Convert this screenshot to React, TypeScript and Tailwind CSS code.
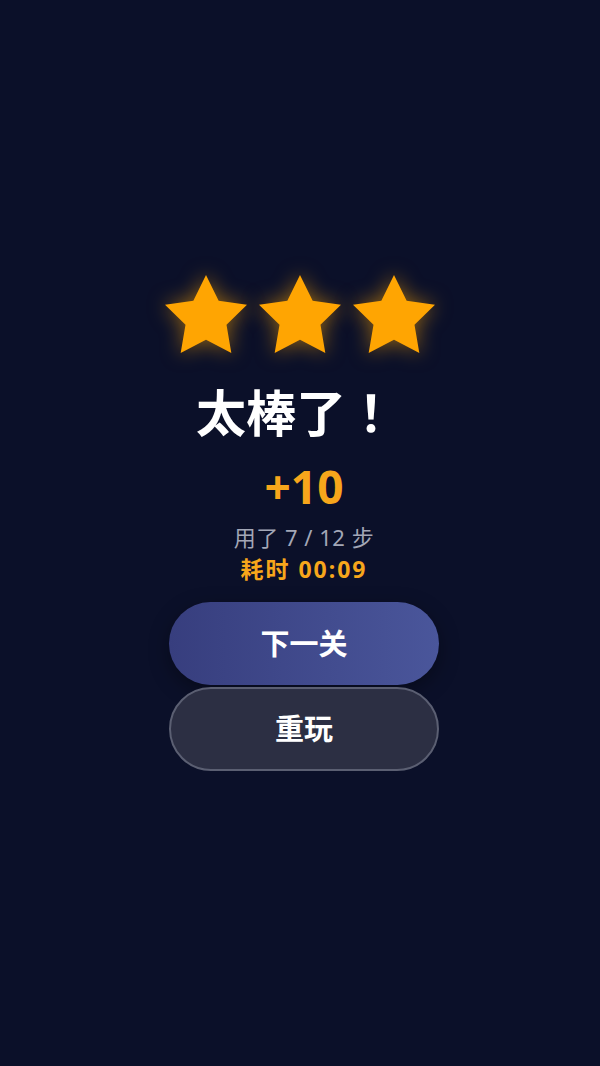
import React from 'react';

const font = { fontFamily: '"Noto Sans", "Noto Sans CJK SC", sans-serif' };
const titleFont = { fontFamily: '"Noto Sans", "Noto Sans CJK JP", sans-serif' };

const Star: React.FC = () => (
  <svg
    width="82"
    height="82"
    viewBox="2 1.5 20 20"
    className="drop-shadow-[0_0_10px_rgba(255,166,0,0.55)]"
  >
    <polygon
      points="12,2 15.09,8.26 22,9.27 17,14.14 18.18,21.02 12,17.77 5.82,21.02 7,14.14 2,9.27 8.91,8.26"
      fill="#ffa502"
    />
  </svg>
);

const App: React.FC = () => {
  return (
    <div className="w-[600px] h-[1066px] bg-[#0b1029] overflow-hidden flex flex-col items-center" style={font}>
      <div className="mt-[273px] flex gap-3">
        <Star />
        <Star />
        <Star />
      </div>
      <div className="flex flex-col items-center pl-2">
        <h1 className="mt-[33px] pr-4 text-[50px] leading-none font-bold text-white" style={titleFont}>
          太棒了！
        </h1>
        <div className="mt-[25px] text-[46px] leading-none font-bold text-[#f7a61b]">+10</div>
        <div className="mt-[17px] text-[22px] leading-none tracking-[0.5px] text-[#a3a7b7]">用了 7 / 12 步</div>
        <div className="mt-[10px] text-[23px] leading-none tracking-[2px] font-bold text-[#f7a61b]">耗时 00:09</div>
        <div className="mt-[21px] flex flex-col gap-[2px] w-[270px]">
          <button className="h-[83px] rounded-full bg-gradient-to-r from-[#373e7e] to-[#4a569b] text-white text-[29px] font-bold shadow-[0_6px_20px_rgba(0,0,0,0.35)]">
            下一关
          </button>
          <button className="h-[84px] rounded-full bg-[#2c2f43] border-2 border-[#5b5f72] text-white text-[29px] font-bold">
            重玩
          </button>
        </div>
      </div>
    </div>
  );
};

export default App;
